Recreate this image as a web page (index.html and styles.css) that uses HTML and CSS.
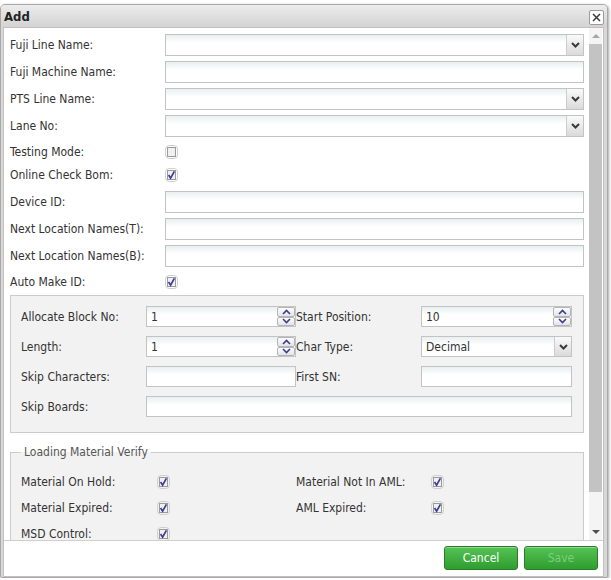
FILE: index.html
```html
<!DOCTYPE html>
<html>
<head>
<meta charset="utf-8">
<title>Add</title>
<link rel="stylesheet" href="styles.css">
</head>
<body>
<div class="dialog">
  <div class="titlebar">
    <span class="title">Add</span>
    <span class="close"><svg width="9" height="9" viewBox="0 0 9 9"><path d="M1 1L8 8M8 1L1 8" stroke="#3c3c3c" stroke-width="1.5"/></svg></span>
  </div>
  <div class="panel">
    <div class="scroll">
      <div class="content">
        <div class="row"><span class="lbl">Fuji Line Name:</span><div class="field select"><span class="val"></span><span class="dd"><svg width="9" height="6" viewBox="0 0 9 6"><path d="M1 1L4.5 4.5L8 1" fill="none" stroke="#3a3a3a" stroke-width="2"/></svg></span></div></div>
        <div class="row"><span class="lbl">Fuji Machine Name:</span><div class="field"></div></div>
        <div class="row"><span class="lbl">PTS Line Name:</span><div class="field select"><span class="val"></span><span class="dd"><svg width="9" height="6" viewBox="0 0 9 6"><path d="M1 1L4.5 4.5L8 1" fill="none" stroke="#3a3a3a" stroke-width="2"/></svg></span></div></div>
        <div class="row"><span class="lbl">Lane No:</span><div class="field select"><span class="val"></span><span class="dd"><svg width="9" height="6" viewBox="0 0 9 6"><path d="M1 1L4.5 4.5L8 1" fill="none" stroke="#3a3a3a" stroke-width="2"/></svg></span></div></div>
        <div class="row crow"><span class="lbl">Testing Mode:</span><svg class="cb" width="13" height="14" viewBox="0 0 13 14"><rect x="0.5" y="0.5" width="12" height="13" rx="3.5" fill="none" stroke="#d0d0d0"/><rect x="2.5" y="2.5" width="8" height="9" fill="#f0f0f0" stroke="#9a9a9a"/></svg></div>
        <div class="row crow crow-b"><span class="lbl">Online Check Bom:</span><svg class="cb" width="13" height="14" viewBox="0 0 13 14"><rect x="0.5" y="0.5" width="12" height="13" rx="3.5" fill="none" stroke="#d0d0d0"/><rect x="2.5" y="2.5" width="8" height="9" fill="#f0f0f0" stroke="#9a9a9a"/><path d="M3.6 7L5.6 10.2L9.4 3.4" fill="none" stroke="#3b3b98" stroke-width="1.7"/></svg></div>
        <div class="row"><span class="lbl">Device ID:</span><div class="field"></div></div>
        <div class="row"><span class="lbl">Next Location Names(T):</span><div class="field"></div></div>
        <div class="row"><span class="lbl">Next Location Names(B):</span><div class="field"></div></div>
        <div class="row crow crow-last"><span class="lbl">Auto Make ID:</span><svg class="cb" width="13" height="14" viewBox="0 0 13 14"><rect x="0.5" y="0.5" width="12" height="13" rx="3.5" fill="none" stroke="#d0d0d0"/><rect x="2.5" y="2.5" width="8" height="9" fill="#f0f0f0" stroke="#9a9a9a"/><path d="M3.6 7L5.6 10.2L9.4 3.4" fill="none" stroke="#3b3b98" stroke-width="1.7"/></svg></div>

        <div class="box">
          <span class="blbl">Allocate Block No:</span>
          <div class="field spin"><span class="val">1</span><span class="spinbtns"><span class="sbtn"><svg width="9" height="6" viewBox="0 0 9 6"><path d="M1 5L4.5 1.5L8 5" fill="none" stroke="#3c3c8c" stroke-width="1.6"/></svg></span><span class="sbtn"><svg width="9" height="6" viewBox="0 0 9 6"><path d="M1 1L4.5 4.5L8 1" fill="none" stroke="#3c3c8c" stroke-width="1.6"/></svg></span></span></div>
          <span class="blbl">Start Position:</span>
          <div class="field spin"><span class="val">10</span><span class="spinbtns"><span class="sbtn"><svg width="9" height="6" viewBox="0 0 9 6"><path d="M1 5L4.5 1.5L8 5" fill="none" stroke="#3c3c8c" stroke-width="1.6"/></svg></span><span class="sbtn"><svg width="9" height="6" viewBox="0 0 9 6"><path d="M1 1L4.5 4.5L8 1" fill="none" stroke="#3c3c8c" stroke-width="1.6"/></svg></span></span></div>

          <span class="blbl">Length:</span>
          <div class="field spin"><span class="val">1</span><span class="spinbtns"><span class="sbtn"><svg width="9" height="6" viewBox="0 0 9 6"><path d="M1 5L4.5 1.5L8 5" fill="none" stroke="#3c3c8c" stroke-width="1.6"/></svg></span><span class="sbtn"><svg width="9" height="6" viewBox="0 0 9 6"><path d="M1 1L4.5 4.5L8 1" fill="none" stroke="#3c3c8c" stroke-width="1.6"/></svg></span></span></div>
          <span class="blbl">Char Type:</span>
          <div class="field select"><span class="val">Decimal</span><span class="dd"><svg width="9" height="6" viewBox="0 0 9 6"><path d="M1 1L4.5 4.5L8 1" fill="none" stroke="#3a3a3a" stroke-width="2"/></svg></span></div>

          <span class="blbl">Skip Characters:</span>
          <div class="field"></div>
          <span class="blbl">First SN:</span>
          <div class="field"></div>

          <span class="blbl">Skip Boards:</span>
          <div class="field wide"></div>
        </div>

        <fieldset class="verify">
          <legend>Loading Material Verify</legend>
          <div class="vgrid">
            <span class="blbl">Material On Hold:</span>
            <svg class="cb" width="13" height="14" viewBox="0 0 13 14"><rect x="0.5" y="0.5" width="12" height="13" rx="3.5" fill="none" stroke="#d0d0d0"/><rect x="2.5" y="2.5" width="8" height="9" fill="#f0f0f0" stroke="#9a9a9a"/><path d="M3.6 7L5.6 10.2L9.4 3.4" fill="none" stroke="#3b3b98" stroke-width="1.7"/></svg>
            <span class="blbl">Material Not In AML:</span>
            <svg class="cb" width="13" height="14" viewBox="0 0 13 14"><rect x="0.5" y="0.5" width="12" height="13" rx="3.5" fill="none" stroke="#d0d0d0"/><rect x="2.5" y="2.5" width="8" height="9" fill="#f0f0f0" stroke="#9a9a9a"/><path d="M3.6 7L5.6 10.2L9.4 3.4" fill="none" stroke="#3b3b98" stroke-width="1.7"/></svg>

            <span class="blbl">Material Expired:</span>
            <svg class="cb" width="13" height="14" viewBox="0 0 13 14"><rect x="0.5" y="0.5" width="12" height="13" rx="3.5" fill="none" stroke="#d0d0d0"/><rect x="2.5" y="2.5" width="8" height="9" fill="#f0f0f0" stroke="#9a9a9a"/><path d="M3.6 7L5.6 10.2L9.4 3.4" fill="none" stroke="#3b3b98" stroke-width="1.7"/></svg>
            <span class="blbl">AML Expired:</span>
            <svg class="cb" width="13" height="14" viewBox="0 0 13 14"><rect x="0.5" y="0.5" width="12" height="13" rx="3.5" fill="none" stroke="#d0d0d0"/><rect x="2.5" y="2.5" width="8" height="9" fill="#f0f0f0" stroke="#9a9a9a"/><path d="M3.6 7L5.6 10.2L9.4 3.4" fill="none" stroke="#3b3b98" stroke-width="1.7"/></svg>

            <span class="blbl">MSD Control:</span>
            <svg class="cb" width="13" height="14" viewBox="0 0 13 14"><rect x="0.5" y="0.5" width="12" height="13" rx="3.5" fill="none" stroke="#d0d0d0"/><rect x="2.5" y="2.5" width="8" height="9" fill="#f0f0f0" stroke="#9a9a9a"/><path d="M3.6 7L5.6 10.2L9.4 3.4" fill="none" stroke="#3b3b98" stroke-width="1.7"/></svg>
            <span></span><span></span>
          </div>
        </fieldset>
      </div>
      <div class="scrollbar">
        <span class="sb-btn"><span class="tri-up"></span></span>
        <span class="sb-thumb"></span>
        <span class="sb-rest"></span>
        <span class="sb-btn"><span class="tri-down"></span></span>
      </div>
    </div>
    <div class="footer">
      <button class="btn">Cancel</button>
      <button class="btn disabled">Save</button>
    </div>
  </div>
</div>
</body>
</html>
```

FILE: styles.css
```css
* { box-sizing: border-box; }
html, body { margin: 0; padding: 0; background: #fff; }
body {
  font-family: "DejaVu Sans Condensed", "DejaVu Sans", sans-serif;
  font-stretch: condensed;
  font-size: 12px;
  color: #333;
}
.dialog {
  margin-top: 4px;
  width: 608px;
  height: 574px;
  border: 1px solid #a9a9a9;
  border-radius: 5px 5px 2px 2px;
  background: #d8d8d8;
  padding: 0 3px 0 2px;
  display: flex;
  flex-direction: column;
  box-shadow: 1px 1px 3px rgba(0,0,0,.35);
}
.titlebar {
  height: 22px;
  flex: none;
  display: flex;
  align-items: center;
  justify-content: space-between;
  padding-left: 3px;
  background: linear-gradient(#ececec, #d3d3d3);
  margin: 0 -3px 0 -2px;
  padding-right: 3px;
  border-radius: 4px 4px 0 0;
}
.title { font-weight: bold; font-size: 13px; color: #222; }
.close {
  width: 15px; height: 15px;
  border: 1px solid #9c9c9c;
  border-radius: 2px;
  background: #fff;
  display: flex; align-items: center; justify-content: center;
  margin-top: 2px;
}
.panel {
  flex: 1;
  border: 1px solid #c6bdbd;
  background: #fff;
  display: flex;
  flex-direction: column;
}
.scroll {
  height: 513px;
  flex: none;
  border-bottom: 1px solid #cfcfcf;
  display: flex;
}
.content {
  flex: 1;
  overflow: hidden;
  padding: 6px 5px 0 6px;
}
.row { display: flex; align-items: center; margin-bottom: 5px; }
.lbl { width: 155px; flex: none; }
.field {
  flex: 1;
  height: 22px;
  border: 1px solid #c3c3c3;
  background: linear-gradient(#e9eff0, #fff 8px);
  display: flex;
  align-items: center;
}
.val { flex: 1; padding-left: 4px; color: #333; }
.dd {
  width: 17px; height: 100%;
  border-left: 1px solid #cdcdcd;
  background: linear-gradient(#fafafa, #dadada);
  display: flex; align-items: center; justify-content: center;
}
.crow { height: 20px; margin-bottom: 3px; }
.crow-b { margin-bottom: 6px; }
.crow-last { margin-bottom: 3px; }
.cb { display: block; flex: none; }

.box {
  border: 1px solid #cbcbcb;
  background: #f2f2f2;
  padding: 10px 10px 15px 10px;
  display: grid;
  grid-template-columns: 125px 150px 125px 151px;
  grid-auto-rows: 21px;
  row-gap: 9px;
  align-items: center;
}
.box .field { height: 21px; }
.wide { grid-column: 2 / span 3; }
.spinbtns {
  width: 18px; height: 100%;
  display: flex; flex-direction: column;
}
.sbtn {
  flex: 1;
  border: 1px solid #b4b4b4;
  border-radius: 2px;
  background: linear-gradient(#fdfdfd, #e2e4ea);
  display: flex; align-items: center; justify-content: center;
}
.verify {
  margin: 12px 0 0 0;
  border: 1px solid #cbcbcb;
  background: #f2f2f2;
  padding: 10px 10px 10px 10px;
  min-width: 0;
}
.verify legend {
  padding: 0 3px;
  line-height: 14px;
  color: #555;
}
.vgrid {
  display: grid;
  grid-template-columns: 136px 139px 135px 1fr;
  grid-auto-rows: 26px;
  align-items: center;
}
.scrollbar {
  width: 13px;
  margin-right: 1px;
  flex: none;
  display: flex;
  flex-direction: column;
  background: #f4f4f4;
}
.sb-btn { height: 16px; display: flex; align-items: center; justify-content: center; flex: none; }
.tri-up { width: 0; height: 0; border-left: 4px solid transparent; border-right: 4px solid transparent; border-bottom: 4px solid #a6a6a6; }
.tri-down { width: 0; height: 0; border-left: 4px solid transparent; border-right: 4px solid transparent; border-top: 4px solid #505050; }
.sb-thumb { height: 448px; background: #c3c3c3; flex: none; }
.sb-rest { flex: 1; }
.footer {
  flex: 1;
  display: flex;
  justify-content: flex-end;
  align-items: flex-start;
  gap: 6px;
  padding: 5px 5px 0 0;
}
.btn {
  width: 74px; height: 24px;
  border: 1px solid #2b7b2b;
  border-radius: 3px;
  background: linear-gradient(#55c355, #2e9d2e);
  box-shadow: inset 0 1px 0 rgba(255,255,255,.35);
  color: #fff;
  font-family: inherit;
  font-stretch: condensed;
  font-size: 12px;
  padding: 0;
}
.btn.disabled { color: #7fcc7f; }
```
